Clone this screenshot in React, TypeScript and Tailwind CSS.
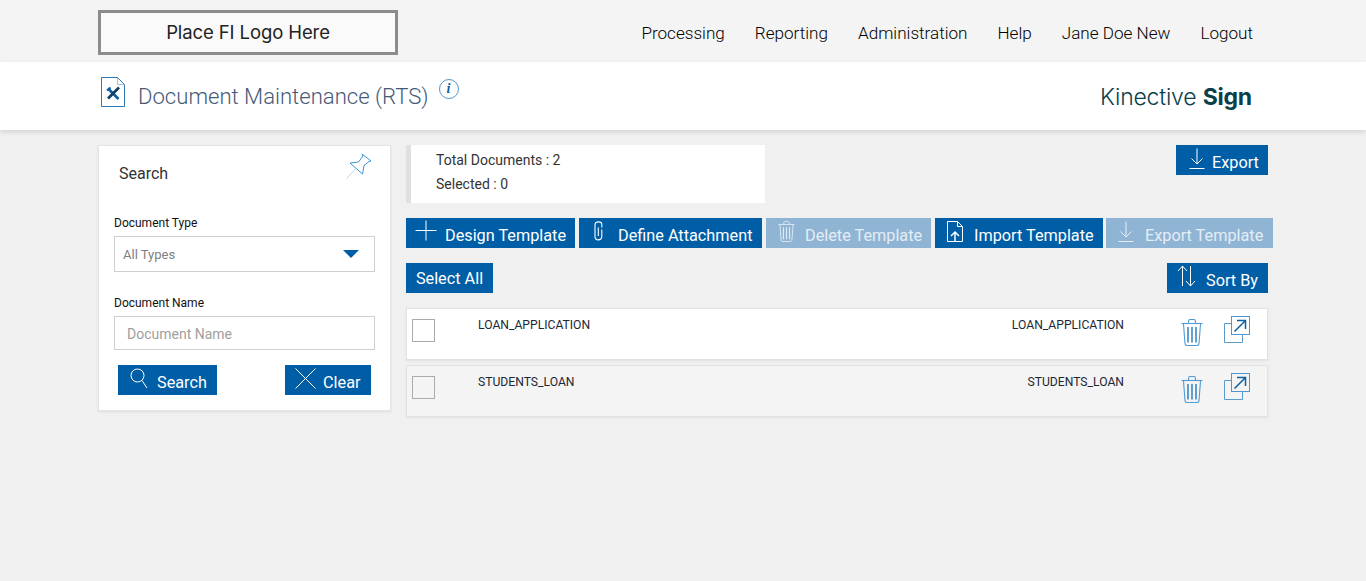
import React from "react";

const roboto = "font-['Roboto',sans-serif]";

function Plus() {
  return (
    <svg width="22" height="22" viewBox="0 0 22 22" fill="none" stroke="currentColor" strokeWidth="1">
      <path d="M11 0.5V20.5M0.5 10.5H21.5" />
    </svg>
  );
}
function Clip() {
  return (
    <svg width="9" height="20" viewBox="0 0 9 20" fill="none" stroke="currentColor" strokeWidth="1.1">
      <path d="M4.3 15V6.5M7.8 6.5V3.5C7.8 0 1 0 1 3.5V15.5C1 20 7.8 20 7.8 15.5V8.5" />
    </svg>
  );
}
function Trash({ w = 17, h = 21, stripe }: { w?: number; h?: number; stripe?: string }) {
  return (
    <svg width={w} height={h} viewBox="0 0 22 27" fill="none" stroke="currentColor" strokeWidth="1.1">
      <path d="M0.5 4.5H21.5" />
      <path d="M7.5 4V2.2C7.5 1 8.5 0.5 9.5 0.5H12.5C13.5 0.5 14.5 1 14.5 2.2V4" />
      <path d="M2.5 5L4 24.5C4 25.6 5 26.5 6 26.5H16C17 26.5 18 25.6 18 24.5L19.5 5" />
      <path d="M7 8V23.5M11 8V23.5M15 8V23.5" strokeWidth="1.4" stroke={stripe ?? "currentColor"} />
    </svg>
  );
}
function DownArrow({ w = 16, h = 21 }: { w?: number; h?: number }) {
  return (
    <svg width={w} height={h} viewBox="0 0 16 21" fill="none" stroke="currentColor" strokeWidth="1">
      <path d="M8 0.5V16M2.5 10.5L8 16L13.5 10.5M0.5 20.5H15.5" />
    </svg>
  );
}
function ImportIcon() {
  return (
    <svg width="16" height="21" viewBox="0 0 16 21" fill="none" stroke="currentColor" strokeWidth="1">
      <path d="M0.5 20.5V0.5H10.5L15.5 5.5V20.5H0.5Z" />
      <path d="M10.5 0.5V5.5H15.5" />
      <path d="M8 20V11.5M4 15L8 11L12 15" strokeWidth="1.5" />
    </svg>
  );
}
function SortIcon() {
  return (
    <svg width="19" height="22" viewBox="0 0 19 22" fill="none" stroke="currentColor" strokeWidth="1">
      <path d="M5.5 21V1M1 6L5.5 1L10 6" />
      <path d="M13.5 1V21M9 16L13.5 21L18 16" />
    </svg>
  );
}
function SearchIcon() {
  return (
    <svg width="18" height="21" viewBox="0 0 18 21" fill="none" stroke="currentColor" strokeWidth="1">
      <circle cx="7.5" cy="7.5" r="6.5" />
      <path d="M12 12.5L17 20" />
    </svg>
  );
}
function XIcon() {
  return (
    <svg width="21" height="21" viewBox="0 0 21 21" fill="none" stroke="currentColor" strokeWidth="1">
      <path d="M0.5 0.5L20.5 20.5M20.5 0.5L0.5 20.5" />
    </svg>
  );
}
function OpenIcon() {
  return (
    <svg width="26" height="27" viewBox="0 0 26 27" fill="none">
      <path d="M7.5 7.5H0.5V26.5H18.5V19" stroke="#5a9bcb" />
      <rect x="7.5" y="0.5" width="18" height="18" fill="transparent" stroke="#4f97cc" />
      <path d="M10.5 15.5L21 5M13 4.5H21.5V13" stroke="#0b5fa5" strokeWidth="1.5" />
    </svg>
  );
}
function Pin() {
  return (
    <svg width="26" height="26" viewBox="0 0 26 26" fill="none" stroke="#3f94d1" strokeWidth="1">
      <path d="M0.5 25.5L9.5 16" stroke="#b9d6ec" />
      <path d="M4 10L12.5 9L17 3L16 1L25 8L23 8.5L18 12.5L16.5 21L4 10Z" />
    </svg>
  );
}
function DocTool() {
  return (
    <svg width="24" height="30" viewBox="0 0 24 30" fill="none">
      <path d="M0.5 29.5V0.5H16.5L23.5 7.5V29.5H0.5Z" stroke="#2d78b4" />
      <path d="M16.5 0.5V7.5H23.5" stroke="#a8bccb" />
      <path d="M7 11.5L17.5 22" stroke="#0a5ea8" strokeWidth="2.6" />
      <path d="M18 10.5L7 21.5" stroke="#123f60" strokeWidth="2.6" />
      <path d="M6 13.5L9.5 10.5" stroke="#0a5ea8" strokeWidth="2" />
    </svg>
  );
}

function Btn({
  icon,
  label,
  className,
  gap,
  pl,
  disabled,
}: {
  icon?: React.ReactNode;
  label: string;
  className: string;
  gap?: string;
  pl?: string;
  disabled?: boolean;
}) {
  return (
    <div
      className={`flex h-[30px] shrink-0 items-center text-[16.25px] leading-none ${pl ?? ""} ${gap ?? ""} ${className} ${
        disabled ? "bg-[#90b5d4] text-[#e4edf5]" : "bg-[#005ea6] text-white"
      }`}
    >
      {icon && <span className="flex -translate-y-[2px] items-center">{icon}</span>}
      <span className={icon ? "translate-y-[3px]" : "translate-y-[1px]"}>{label}</span>
    </div>
  );
}

function Row({ name, alt }: { name: string; alt?: boolean }) {
  return (
    <div
      className={`flex h-[52px] border border-[#e2e2e2] shadow-[0_1px_2px_rgba(0,0,0,0.06)] ${
        alt ? "bg-[#f4f4f4]" : "bg-white"
      }`}
    >
      <div className="ml-[5px] mt-[10px] h-[23px] w-[23px] border border-[#ababab]" />
      <div className="ml-[43px] mt-[9px] text-[12.15px] leading-[14px] text-[#1c2733]">{name}</div>
      <div className="ml-auto mr-[143px] mt-[9px] text-[12.15px] leading-[14px] text-[#1c2733]">{name}</div>
      <div className="absolute ml-[774px] mt-[10px] text-[#4f9bd3]">
        <Trash w={22} h={27} stripe="#2079bd" />
      </div>
      <div className="absolute ml-[817px] mt-[7px]">
        <OpenIcon />
      </div>
    </div>
  );
}

export default function App() {
  return (
    <div className={`min-h-[581px] w-full bg-[#f0f0f0] ${roboto}`}>
      <div className="h-[62px] bg-[#f4f4f4]">
        <div className="mx-auto flex h-full w-[1170px] items-start justify-between">
          <div className="mt-[10px] flex h-[45px] w-[300px] items-center justify-center border-[3px] border-[#8c8c8c] bg-[#fafafa] font-['Inter',sans-serif] text-[18.5px] tracking-[-0.1px] text-[#222]">
            Place FI Logo Here
          </div>
          <nav className="mt-[23px] mr-[15px] flex gap-[30px] text-[17.1px] leading-[20px] font-light text-black">
            <span>Processing</span>
            <span>Reporting</span>
            <span>Administration</span>
            <span>Help</span>
            <span>Jane Doe New</span>
            <span>Logout</span>
          </nav>
        </div>
      </div>

      <div className="h-[68px] bg-white shadow-[0_2px_5px_rgba(0,0,0,0.12)]">
        <div className="mx-auto flex h-full w-[1170px] items-start">
          <div className="ml-[3px] mt-[15px]">
            <DocTool />
          </div>
          <div className="ml-[13px] mt-[20px] text-[22.1px] leading-[28px] font-light text-[#465a78]">
            Document Maintenance (RTS)
          </div>
          <div className="ml-[10px] mt-[17px] flex h-[20px] w-[20px] items-center justify-center rounded-full border border-[#4f97cc] font-['Liberation_Serif',serif] text-[14px] font-bold italic leading-none text-[#0b5fa5]">
            i
          </div>
          <div className="ml-auto mr-[16px] mt-[21px] font-['Inter',sans-serif] text-[23px] leading-[28px] font-light tracking-[-0.2px] text-[#0b3f4a]">
            Kinective <span className="font-bold text-[#0b3f4a]">Sign</span>
          </div>
        </div>
      </div>

      <div className="mx-auto mt-[15px] flex w-[1170px] items-start gap-[15px]">
        <div className="h-[266px] w-[293px] shrink-0 border border-[#e4e4e4] bg-white px-[15px] shadow-[0_1px_2px_rgba(0,0,0,0.08)]">
          <div className="flex h-[64px] items-start justify-between">
            <div className="ml-[5px] mt-[18px] text-[16px] leading-[20px] text-[#333]">Search</div>
            <div className="mr-[3px] mt-[7px]">
              <Pin />
            </div>
          </div>
          <div className="mt-[6px] text-[12px] leading-[14px] text-[#111]">Document Type</div>
          <div className="mt-[6px] flex h-[36px] items-center justify-between border border-[#cfcfcf] pl-[8px] pr-[15px] text-[13px] text-[#808080]">
            <span className="translate-y-[1px]">All Types</span>
            <svg width="16" height="8" viewBox="0 0 16 8">
              <path d="M0 0H16L8 8Z" fill="#005ea6" />
            </svg>
          </div>
          <div className="mt-[24px] flex h-[14px] items-center text-[12px] text-[#111]">Document Name</div>
          <div className="mt-[6px] flex h-[34px] items-center border border-[#cfcfcf] pl-[12px] text-[14px] text-[#a0a0a0]">
            <span className="translate-y-[1px]">Document Name</span>
          </div>
          <div className="mt-[15px] flex justify-between px-[4px]">
            <Btn icon={<SearchIcon />} label="Search" className="w-[99px]" pl="pl-[12px]" gap="gap-[9px]" />
            <Btn icon={<XIcon />} label="Clear" className="w-[86px]" pl="pl-[10px]" gap="gap-[7px]" />
          </div>
        </div>

        <div className="relative w-[862px] shrink-0">
          <div className="flex items-start justify-between">
            <div className="h-[58px] w-[359px] border-l-[5px] border-[#e0e0e0] bg-white pl-[25px] pt-[3px] text-[14px] leading-[24px] text-[#333]">
              <div>Total Documents : 2</div>
              <div>Selected : 0</div>
            </div>
            <Btn icon={<DownArrow />} label="Export" className="w-[92px]" pl="pl-[13px]" gap="gap-[7px]" />
          </div>

          <div className="mt-[15px] flex w-[867px]">
            <Btn icon={<Plus />} label="Design Template" className="w-[169px]" pl="pl-[9px]" gap="gap-[8px]" />
            <Btn icon={<Clip />} label="Define Attachment" className="ml-[4px] w-[183px]" pl="pl-[15px]" gap="gap-[15px]" />
            <Btn icon={<Trash />} label="Delete Template" disabled className="ml-[4px] w-[165px]" pl="pl-[12px]" gap="gap-[10px]" />
            <Btn icon={<ImportIcon />} label="Import Template" className="ml-[4px] w-[168px]" pl="pl-[12px]" gap="gap-[11px]" />
            <Btn icon={<DownArrow />} label="Export Template" disabled className="ml-[3px] w-[167px]" pl="pl-[12px]" gap="gap-[11px]" />
          </div>

          <div className="mt-[15px] flex justify-between">
            <Btn label="Select All" className="w-[87px] justify-center" />
            <Btn icon={<SortIcon />} label="Sort By" className="w-[101px]" pl="pl-[10px]" gap="gap-[10px]" />
          </div>

          <div className="mt-[15px] flex flex-col gap-[5px]">
            <Row name="LOAN_APPLICATION" />
            <Row name="STUDENTS_LOAN" alt />
          </div>
        </div>
      </div>
    </div>
  );
}
